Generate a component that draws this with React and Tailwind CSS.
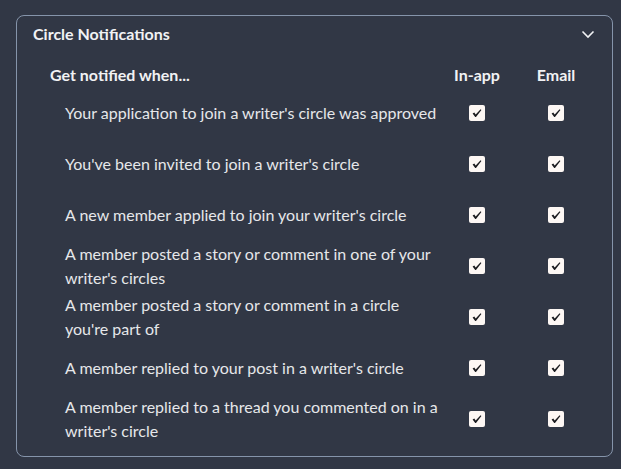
const rows = [
  "Your application to join a writer's circle was approved",
  "You've been invited to join a writer's circle",
  "A new member applied to join your writer's circle",
  "A member posted a story or comment in one of your writer's circles",
  "A member posted a story or comment in a circle you're part of",
  "A member replied to your post in a writer's circle",
  "A member replied to a thread you commented on in a writer's circle",
];

function Check() {
  return (
    <div className="flex h-4 w-4 items-center justify-center rounded-[2px] bg-[#fdf7f4]">
      <svg width="12" height="12" viewBox="0 0 12 12">
        <path d="M1.6 6.6 L3.3 5.6 L4.7 7.6 L9.6 2.2 L10.4 2.9 L5 10 L4.2 10 Z" fill="#1b1b1f" />
      </svg>
    </div>
  );
}

export default function App() {
  return (
    <div className="min-h-screen bg-[#313745] pl-4 pr-2 pt-[15px] font-['Lato',sans-serif]">
      <div className="rounded-lg border border-[#8594aa] px-4 pb-3 pt-[6px]">
        <div className="flex h-6 items-center justify-between">
          <h2 className="text-base font-bold leading-6 text-[#f1f2f4]">Circle Notifications</h2>
          <svg width="14" height="14" viewBox="0 0 14 14" className="mr-[1px]">
            <path d="M1.5 4.5 L7 10 L12.5 4.5" fill="none" stroke="#f1f2f4" strokeWidth="1.6" />
          </svg>
        </div>

        <div className="mt-[17px] pl-[17px]">
          <div className="grid h-6 grid-cols-[1fr_78px_80px] items-center text-base font-bold leading-6 text-[#f1f2f4]">
            <span>Get notified when...</span>
            <span className="text-center">In-app</span>
            <span className="text-center">Email</span>
          </div>
          {rows.map((r) => (
            <div key={r} className="grid h-[51px] grid-cols-[1fr_78px_80px] items-center">
              <span className="pl-[15px] text-base leading-6 text-[#e6e7ea]">{r}</span>
              <div className="flex justify-center">
                <Check />
              </div>
              <div className="flex justify-center">
                <Check />
              </div>
            </div>
          ))}
        </div>
      </div>
    </div>
  );
}
